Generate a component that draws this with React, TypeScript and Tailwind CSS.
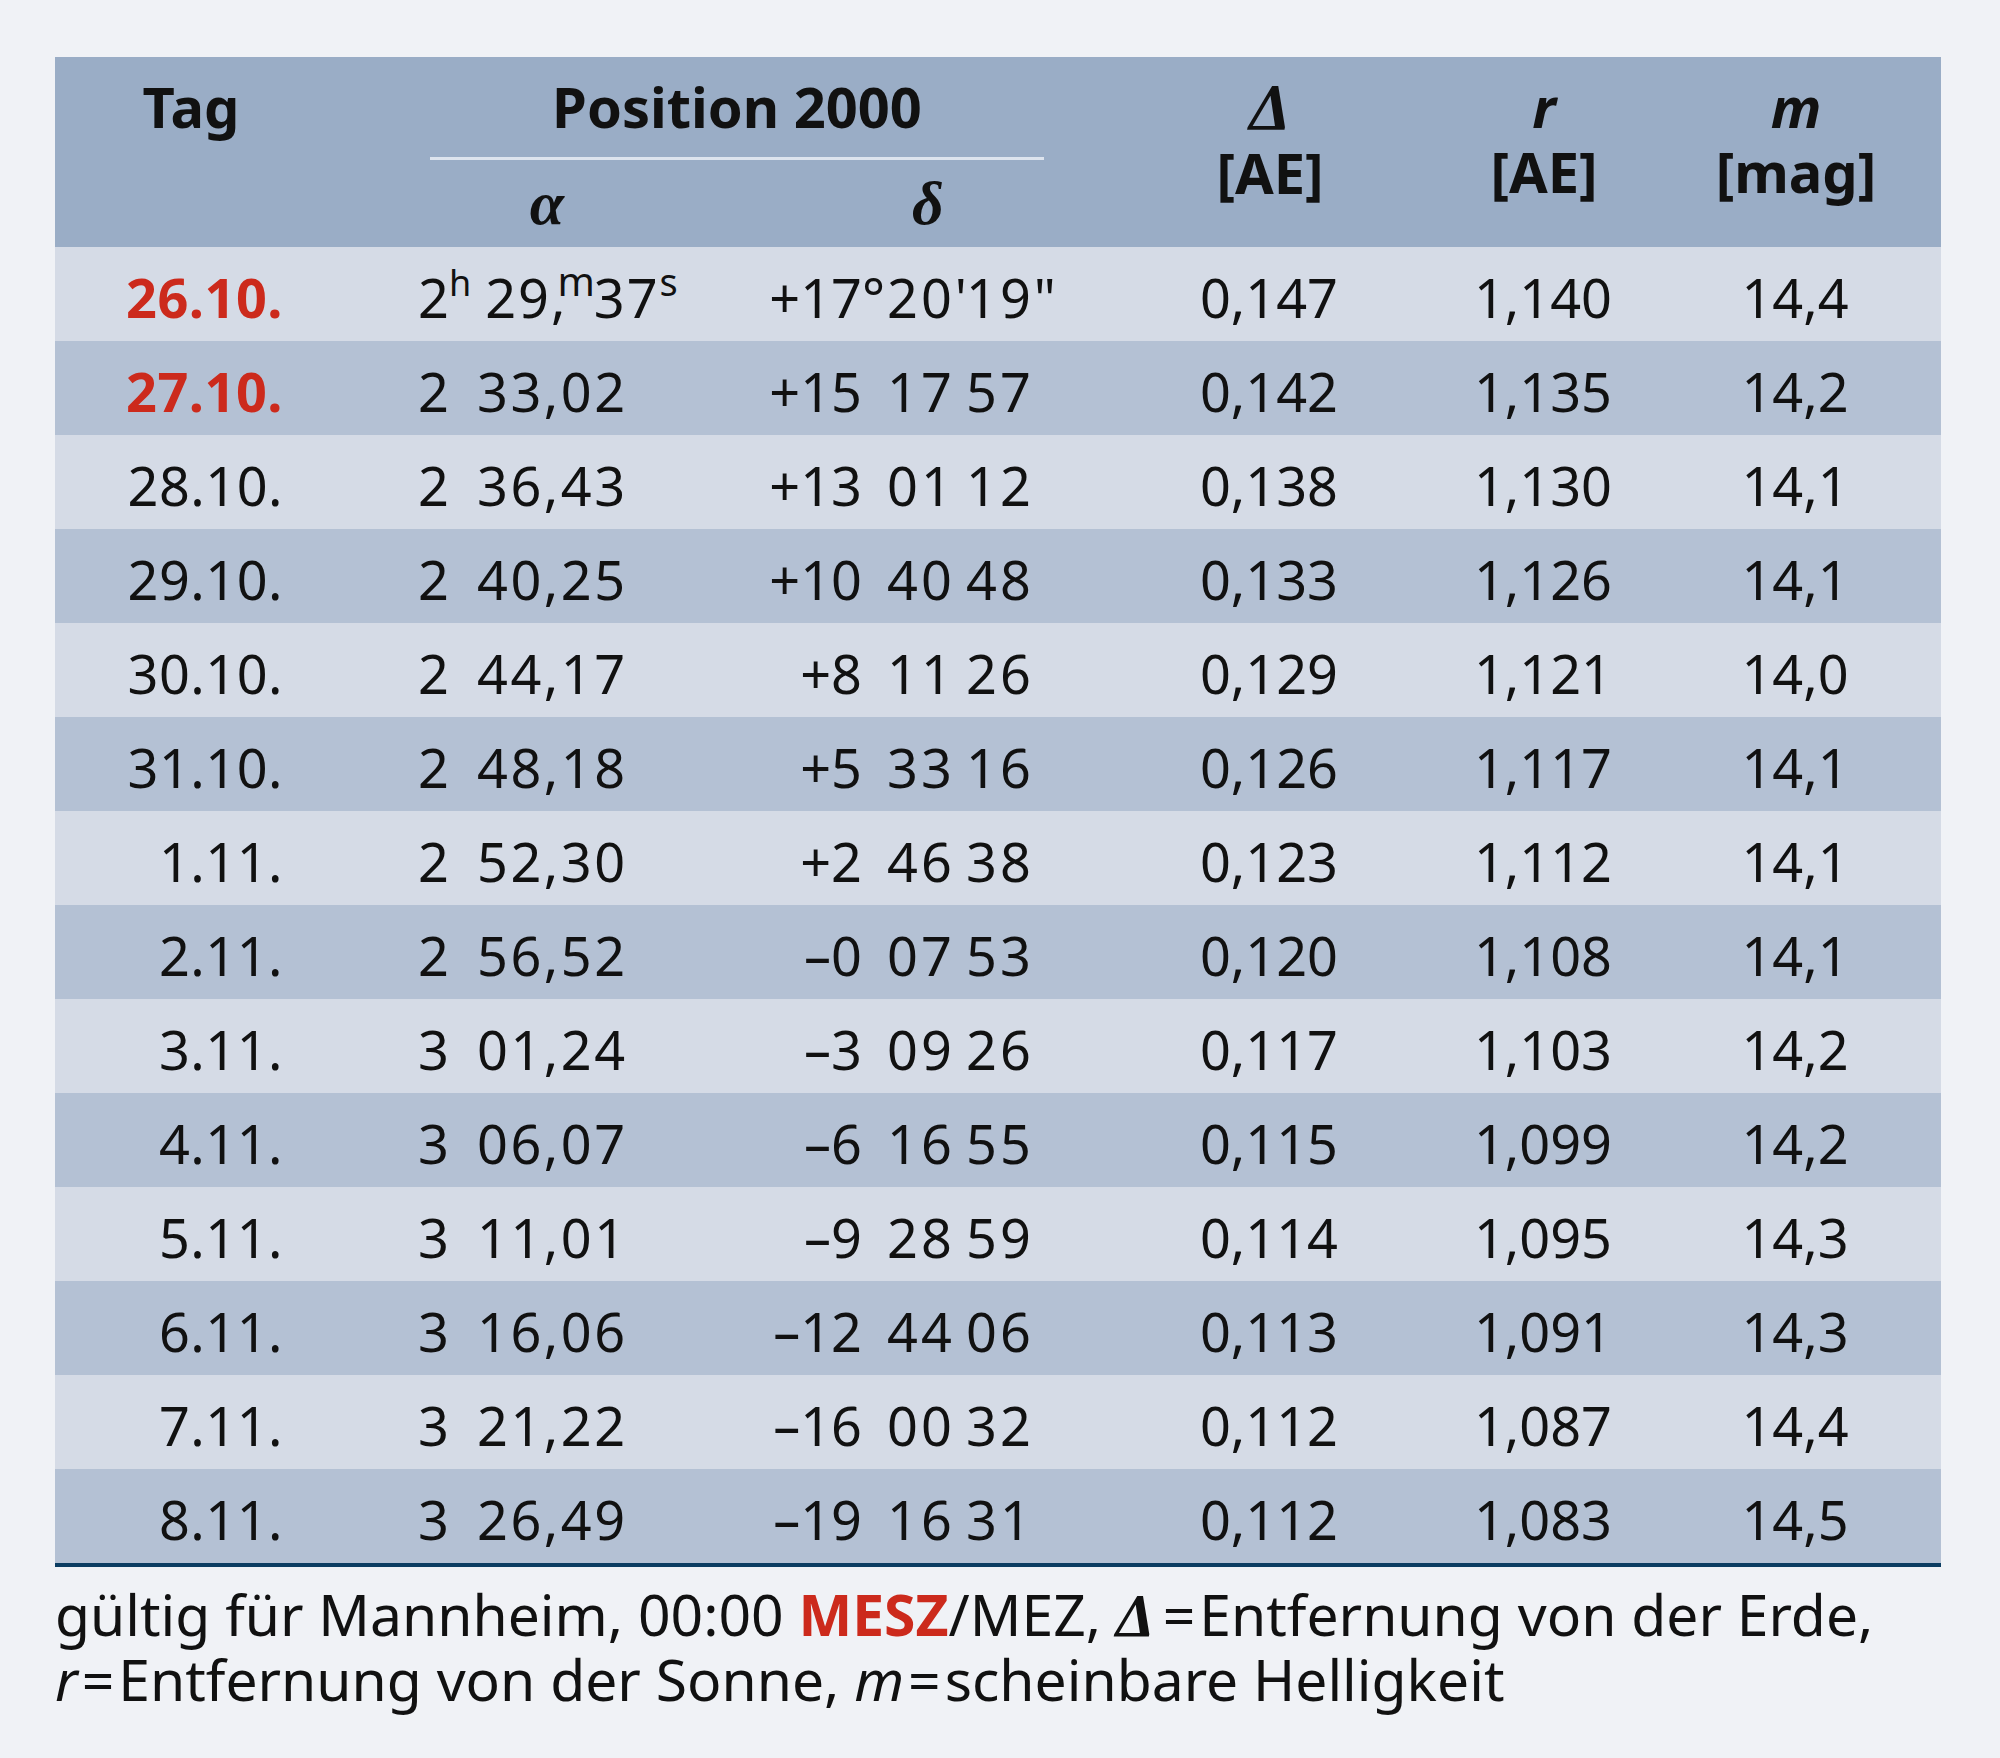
import React from 'react';

type Row = {
  date: string;
  red?: boolean;
  raH: string;
  raM: string;
  decD: string;
  decM: string;
  decS: string;
  delta: string;
  r: string;
  m: string;
};

const rows: Row[] = [
  { date: '26.10.', red: true, raH: '2', raM: '29,37', decD: '+17', decM: '20', decS: '19', delta: '0,147', r: '1,140', m: '14,4' },
  { date: '27.10.', red: true, raH: '2', raM: '33,02', decD: '+15', decM: '17', decS: '57', delta: '0,142', r: '1,135', m: '14,2' },
  { date: '28.10.', raH: '2', raM: '36,43', decD: '+13', decM: '01', decS: '12', delta: '0,138', r: '1,130', m: '14,1' },
  { date: '29.10.', raH: '2', raM: '40,25', decD: '+10', decM: '40', decS: '48', delta: '0,133', r: '1,126', m: '14,1' },
  { date: '30.10.', raH: '2', raM: '44,17', decD: '+8', decM: '11', decS: '26', delta: '0,129', r: '1,121', m: '14,0' },
  { date: '31.10.', raH: '2', raM: '48,18', decD: '+5', decM: '33', decS: '16', delta: '0,126', r: '1,117', m: '14,1' },
  { date: '1.11.', raH: '2', raM: '52,30', decD: '+2', decM: '46', decS: '38', delta: '0,123', r: '1,112', m: '14,1' },
  { date: '2.11.', raH: '2', raM: '56,52', decD: '–0', decM: '07', decS: '53', delta: '0,120', r: '1,108', m: '14,1' },
  { date: '3.11.', raH: '3', raM: '01,24', decD: '–3', decM: '09', decS: '26', delta: '0,117', r: '1,103', m: '14,2' },
  { date: '4.11.', raH: '3', raM: '06,07', decD: '–6', decM: '16', decS: '55', delta: '0,115', r: '1,099', m: '14,2' },
  { date: '5.11.', raH: '3', raM: '11,01', decD: '–9', decM: '28', decS: '59', delta: '0,114', r: '1,095', m: '14,3' },
  { date: '6.11.', raH: '3', raM: '16,06', decD: '–12', decM: '44', decS: '06', delta: '0,113', r: '1,091', m: '14,3' },
  { date: '7.11.', raH: '3', raM: '21,22', decD: '–16', decM: '00', decS: '32', delta: '0,112', r: '1,087', m: '14,4' },
  { date: '8.11.', raH: '3', raM: '26,49', decD: '–19', decM: '16', decS: '31', delta: '0,112', r: '1,083', m: '14,5' },
];

const sans = "font-['Noto_Sans',sans-serif]";
const serifSym = "font-['Liberation_Serif',serif] italic font-bold";

function DataRow({ row, index }: { row: Row; index: number }) {
  const first = index === 0;
  return (
    <div
      className={`flex h-[94px] pt-[6px] leading-[88px] whitespace-nowrap ${
        index % 2 === 0 ? 'bg-[#d5dbe6]' : 'bg-[#b4c1d4]'
      }`}
    >
      <span className={`w-[228px] text-right tracking-[0.5px] ${row.red ? 'font-bold text-[#cc2a1c]' : ''}`}>
        {row.date}
      </span>

      {first ? (
        <span className="ml-[135px] w-[282px]">
          2<span className="relative -top-[22px] text-[36px]">h</span>
          <span className="ml-[14px] tracking-[2px]">29,</span>
          <span className="relative -top-[22px] -ml-[10px] text-[40px]">m</span>
          <span className="-ml-[1px] tracking-[2px]">37</span>
          <span className="relative -top-[22px] text-[38px]">s</span>
        </span>
      ) : (
        <>
          <span className="ml-[135px] w-[59px]">{row.raH}</span>
          <span className="w-[223px] tracking-[2.5px]">{row.raM}</span>
        </>
      )}

      <span className="w-[162px] text-right">{row.decD}</span>
      <span className="w-[25px]">{first ? '°' : ''}</span>
      <span className="w-[79px] tracking-[3px]">
        {row.decM}
        {first ? "'" : ''}
      </span>
      <span className="w-[188px] tracking-[3px]">
        {row.decS}
        {first ? '"' : ''}
      </span>

      <span className="w-[230px] text-center">{row.delta}</span>
      <span className="w-[318px] text-center">{row.r}</span>
      <span className="w-[186px] text-center">{row.m}</span>
    </div>
  );
}

function Header() {
  return (
    <div className="flex h-[190px] bg-[#9aadc6] pt-[17px] text-[56px] font-bold leading-[65px]">
      <div className="w-[272px] text-center">Tag</div>

      <div className="ml-[103px] w-[614px]">
        <div className="text-center">Position 2000</div>
        <div className="mt-[18px] h-[3px] bg-[#dde4ee]" />
        <div className="mt-[10px] flex">
          <div className="w-[234px] text-center">
            <span className={`${serifSym} text-[62px]`}>α</span>
          </div>
          <div className="ml-[164px] w-[200px] text-center">
            <span className={`${serifSym} text-[62px]`}>δ</span>
          </div>
        </div>
      </div>

      <div className="ml-[126px] w-[200px] text-center">
        <div>
          <span className={`${serifSym} text-[66px]`}>Δ</span>
        </div>
        <div>[AE]</div>
      </div>
      <div className="ml-[74px] w-[200px] text-center">
        <div className="italic">r</div>
        <div>[AE]</div>
      </div>
      <div className="ml-[52px] w-[200px] text-center">
        <div className="italic">m</div>
        <div>[mag]</div>
      </div>
    </div>
  );
}

export default function App() {
  return (
    <div className={`min-h-[1758px] bg-[#f0f2f6] pl-[55px] pr-[59px] pt-[57px] text-[#111] ${sans}`}>
      <div className="text-[54px]">
        <Header />
        {rows.map((row, i) => (
          <DataRow key={row.date} row={row} index={i} />
        ))}
        <div className="h-[4px] bg-[#0b3d62]" />
      </div>

      <p className="mt-[15px] text-[57px] leading-[64px] whitespace-nowrap">
        gültig für Mannheim, 00:00 <span className="font-bold text-[#cc2a1c]">MESZ</span>/MEZ,{' '}
        <span className={`${serifSym} text-[62px]`}>Δ</span>
        <span className="ml-[8px] mr-[4px]">=</span>Entfernung von der Erde,
        <br />
        <span className="italic">r</span>
        <span className="ml-[4px] mr-[4px]">=</span>Entfernung von der Sonne, <span className="italic">m</span>
        <span className="ml-[4px] mr-[4px]">=</span>scheinbare Helligkeit
      </p>
    </div>
  );
}
